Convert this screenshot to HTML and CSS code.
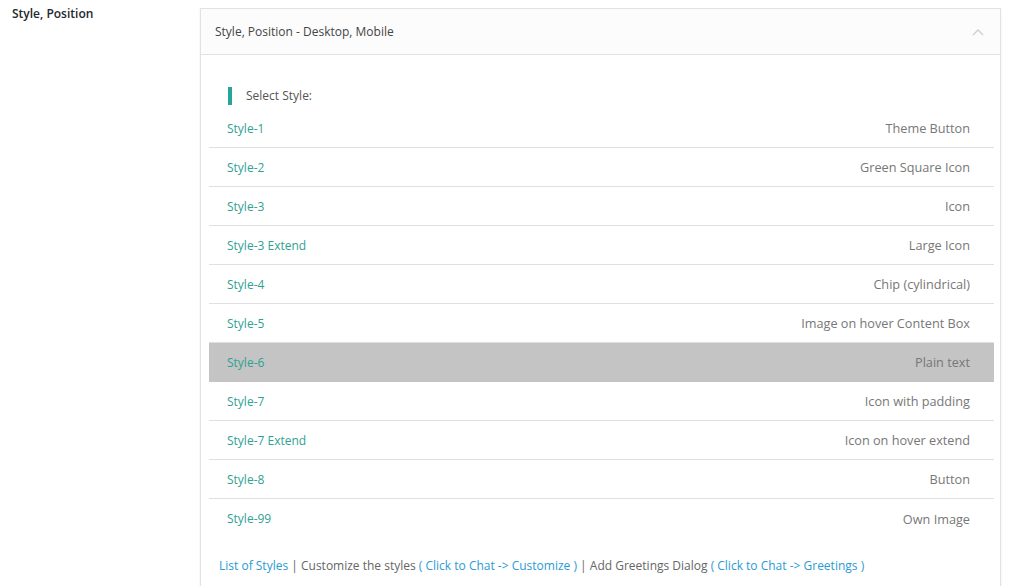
FILE: index.html
```html
<!DOCTYPE html>
<html>
<head>
<meta charset="utf-8">
<link rel="stylesheet" href="styles.css">
</head>
<body>
<div class="page">
  <div class="label">Style, Position</div>
  <div class="box">
    <div class="box-head">
      <span>Style, Position - Desktop, Mobile</span>
      <svg class="chev" width="12" height="8" viewBox="0 0 12 8"><path d="M1 7 L6 2 L11 7" fill="none" stroke="#cfcfcf" stroke-width="1.4"/></svg>
    </div>
    <div class="box-body">
      <div class="select-title">Select Style:</div>
      <ul class="styles">
        <li><span class="name">Style-1</span><span class="desc">Theme Button</span></li>
        <li><span class="name">Style-2</span><span class="desc">Green Square Icon</span></li>
        <li><span class="name">Style-3</span><span class="desc">Icon</span></li>
        <li><span class="name">Style-3 Extend</span><span class="desc">Large Icon</span></li>
        <li><span class="name">Style-4</span><span class="desc">Chip (cylindrical)</span></li>
        <li><span class="name">Style-5</span><span class="desc">Image on hover Content Box</span></li>
        <li class="active"><span class="name">Style-6</span><span class="desc">Plain text</span></li>
        <li><span class="name">Style-7</span><span class="desc">Icon with padding</span></li>
        <li><span class="name">Style-7 Extend</span><span class="desc">Icon on hover extend</span></li>
        <li><span class="name">Style-8</span><span class="desc">Button</span></li>
        <li><span class="name">Style-99</span><span class="desc">Own Image</span></li>
      </ul>
      <p class="footer"><a>List of Styles</a> | Customize the styles <a>( Click to Chat -&gt; Customize )</a> | Add Greetings Dialog <a>( Click to Chat -&gt; Greetings )</a></p>
    </div>
  </div>
</div>
</body>
</html>
```
FILE: styles.css
```css
html, body {
  margin: 0;
  padding: 0;
  background: #ffffff;
  overflow: hidden;
}
body {
  font-family: "Open Sans", "Noto Sans", sans-serif;
  font-size: 12px;
  color: #666;
}
.page {
  display: flex;
  align-items: flex-start;
  padding: 0 0 0 12px;
  height: 586px;
}
.label {
  width: 188px;
  flex: none;
  font-weight: 600;
  font-size: 12px;
  color: #23282d;
  padding-top: 6px;
  line-height: 16px;
}
.box {
  margin-top: 8px;
  width: 799px;
  border: 1px solid #e2e2e2;
  box-shadow: 0 1px 2px rgba(0,0,0,0.08);
  background: #fff;
  height: 600px;
}
.box-head {
  height: 46px;
  box-sizing: border-box;
  border-bottom: 1px solid #e2e2e2;
  background: #fcfcfc;
  display: flex;
  align-items: center;
  justify-content: space-between;
  padding: 0 16px 0 14px;
  color: #444;
  font-size: 12px;
}
.chev { margin-right: 0; }
.box-body {
  padding: 32px 6px 0 8px;
}
.select-title {
  margin-left: 19px;
  border-left: 4px solid #26a69a;
  padding-left: 14px;
  height: 18px;
  line-height: 18px;
  color: #555;
  font-size: 12px;
}
.styles {
  list-style: none;
  margin: 4px 0 0 0;
  padding: 0;
}
.styles li {
  display: flex;
  justify-content: space-between;
  align-items: center;
  height: 39px;
  box-sizing: border-box;
  border-bottom: 1px solid #e0e0e0;
  padding: 0 24px 0 18px;
  font-size: 12px;
}
.styles li:last-child { border-bottom: none; }
.styles li.active { background: #c4c4c4; border-bottom-color: #c4c4c4; }
.name { color: #2fa193; }
.desc { color: #777; font-size: 12.7px; }
.footer {
  margin: 19px 0 0 10px;
  font-size: 12px;
  color: #666;
}
.footer a { color: #2a9bd3; }
```
